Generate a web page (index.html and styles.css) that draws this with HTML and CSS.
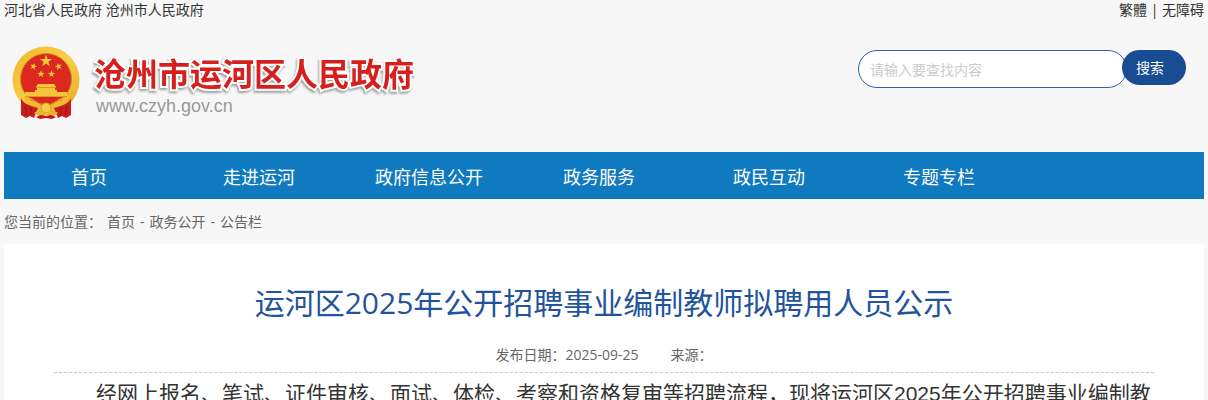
FILE: index.html
```html
<!DOCTYPE html>
<html lang="zh-CN">
<head>
    <meta charset="UTF-8">
    <meta name="viewport" content="width=device-width, initial-scale=1.0">
    <title>运河区2025年公开招聘事业编制教师拟聘用人员公示</title>
    <link rel="stylesheet" href="styles.css">
</head>
<body>
    <div class="container">
        <div class="topbar">
            <div>
                <a href="#">河北省人民政府</a>
                <a href="#">沧州市人民政府</a>
            </div>
            <div>
                <a href="#" lang="zh-TW">繁體</a> | <a href="#">无障碍</a>
            </div>
        </div>

        <header class="header">
            <a href="#" class="logo">
                <svg class="emblem" viewBox="0 0 68 74" aria-hidden="true">
                    <defs>
                        <linearGradient id="gold" x1="0" y1="0" x2="1" y2="1">
                            <stop offset="0" stop-color="#efb52c"/>
                            <stop offset="0.5" stop-color="#f8cf45"/>
                            <stop offset="1" stop-color="#e8a522"/>
                        </linearGradient>
                        <path id="star" d="M0-5 1.2-1.6 4.8-1.5 1.9.6 2.9 4 0 2-2.9 4-1.9.6-4.8-1.5-1.2-1.6z"/>
                    </defs>
                    <circle cx="34" cy="34" r="33.5" fill="url(#gold)"/>
                    <circle cx="34" cy="33" r="25.5" fill="#dc281e" stroke="#c98b1c" stroke-width="1"/>
                    <g fill="#f5c53b">
                        <use href="#star" transform="translate(34 15) scale(1.3)"/>
                        <use href="#star" transform="translate(21.500 20.500) scale(.75) rotate(15)"/>
                        <use href="#star" transform="translate(46.500 20.500) scale(.75) rotate(-15)"/>
                        <use href="#star" transform="translate(29 28) scale(.75)"/>
                        <use href="#star" transform="translate(39.500 28) scale(.75)"/>
                        <path d="M26 38h16l2 3H24z"/>
                        <path d="M25 40.500h18v4H25z"/>
                        <path d="M23 44h22v2h10v4H13v-4h10z"/>
                    </g>
                    <path d="M24 41.500h20M13 50.500h42" stroke="#d99a22" stroke-width="1"/>
                    <path d="M11 51c8-1 14 5 19 8h8c5-3 11-9 19-8l-7 11-12 4h-8l-12-4z" fill="#f1b934"/>
                    <path d="M18 54c5 0 8 3 12 5M50 54c-5 0-8 3-12 5" fill="none" stroke="#c88a20" stroke-width="1"/>
                    <path d="M9 52c2 6 10 8 17 10l-4 10-4-2-4 2-5-3z" fill="#c91d1a"/>
                    <path d="M59 52c-2 6-10 8-17 10l4 10 4-2 4 2 5-3z" fill="#c91d1a"/>
                    <path d="M13 60l2 9M55 60l-2 9M19 62v7M49 62v7" stroke="#981313" stroke-width="1"/>
                    <circle cx="34" cy="62" r="5" fill="#f7cc48" stroke="#d99a22" stroke-width="1"/>
                    <path d="M22 67c5-3 8-2 12 0 4-2 7-3 12 0l-6 4-6-2-6 2z" fill="#eeb12d"/>
                    <path d="M24 71l5-2 5 1 5-1 5 2-4 2-6-1-6 1z" fill="#bd1a18"/>
                </svg>
                <span class="logo-text">
                    <span class="site-name">沧州市运河区人民政府</span>
                    <span class="site-url">www.czyh.gov.cn</span>
                </span>
            </a>
            <form class="search" onsubmit="return false">
                <input type="text" name="keyword" aria-label="搜索内容" placeholder="请输入要查找内容">
                <button type="submit">搜索</button>
            </form>
        </header>

        <nav class="nav">
            <a href="#">首页</a>
            <a href="#">走进运河</a>
            <a href="#">政府信息公开</a>
            <a href="#">政务服务</a>
            <a href="#">政民互动</a>
            <a href="#">专题专栏</a>
        </nav>

        <div class="location">
            <span class="label">您当前的位置：</span>
            <a href="#">首页</a>
            <span>-</span>
            <a href="#">政务公开</a>
            <span>-</span>
            <a href="#">公告栏</a>
        </div>

        <main class="article">
            <h1>运河区2025年公开招聘事业编制教师拟聘用人员公示</h1>
            <div class="info">
                <span>发布日期：2025-09-25</span>
                <span>来源：</span>
            </div>
            <div class="content">
                <p>经网上报名、笔试、证件审核、面试、体检、考察和资格复审等招聘流程，现将运河区2025年公开招聘事业编制教</p>
            </div>
        </main>
    </div>
</body>
</html>
```

FILE: styles.css
```css
* {
    box-sizing: border-box;
}
body {
    margin: 0;
    background-color: #f7f7f7;
    font-family: "Open Sans", "Noto Sans CJK SC", sans-serif;
    font-size: 14px;
    line-height: 20px;
    color: #333;
}
a {
    color: inherit;
    text-decoration: none;
}
.container {
    max-width: 1200px;
    margin: 0 auto;
}
.topbar {
    display: flex;
    justify-content: space-between;
}
.header {
    display: flex;
    justify-content: space-between;
    align-items: flex-start;
    height: 132px;
    padding: 26px 18px 0 8px;
}
.logo {
    display: flex;
    gap: 14px;
}
.emblem {
    width: 68px;
    height: 74px;
}
.logo-text {
    display: flex;
    flex-direction: column;
    padding-top: 8px;
}
.site-name {
    font-size: 32px;
    line-height: 40px;
    font-weight: bold;
    color: #d71f1d;
    -webkit-text-stroke: 4px #fff;
    paint-order: stroke fill;
    filter: drop-shadow(-1px 2px 1px rgba(0, 0, 0, 0.35));
}
.site-url {
    padding-left: 2px;
    font-family: "Liberation Sans", Arial, sans-serif;
    font-size: 18px;
    line-height: 24px;
    color: #999;
}
.search {
    display: flex;
    align-items: flex-start;
    padding-top: 4px;
}
.search input {
    width: 269px;
    height: 38px;
    padding: 0 11px;
    border: 1px solid #2b62ad;
    border-radius: 19px;
    background-color: #fff;
    font: inherit;
    outline: none;
}
.search input::placeholder {
    color: #ccc;
}
.search button {
    width: 64px;
    height: 35px;
    margin-left: -5px;
    padding: 0 22px 0 14px;
    border: none;
    border-radius: 18px;
    background-color: #1a4c93;
    color: #fff;
    font: inherit;
    white-space: nowrap;
    cursor: pointer;
}
.nav {
    display: flex;
    background-color: #107ac1;
}
.nav a {
    width: 170px;
    padding-top: 3px;
    font-size: 18px;
    line-height: 44px;
    text-align: center;
    color: #fff;
}
.nav a:hover {
    background-color: #1a4c93;
}
.location {
    display: flex;
    gap: 5px;
    line-height: 45px;
    color: #666;
}
.article {
    min-height: 200px;
    padding: 36px 50px;
    background-color: #fff;
}
.article h1 {
    margin: 0;
    font-size: 30px;
    line-height: 45px;
    font-weight: normal;
    text-align: center;
    color: #21549c;
}
.info {
    display: flex;
    justify-content: center;
    gap: 32px;
    padding: 20px 0 7px;
    border-bottom: 1px dashed #ccc;
    color: #666;
}
.content {
    font-family: "Liberation Sans", "Noto Sans CJK SC", sans-serif;
    font-size: 21px;
    line-height: 42px;
}
.content p {
    margin: 0;
    text-indent: 2em;
}
```
